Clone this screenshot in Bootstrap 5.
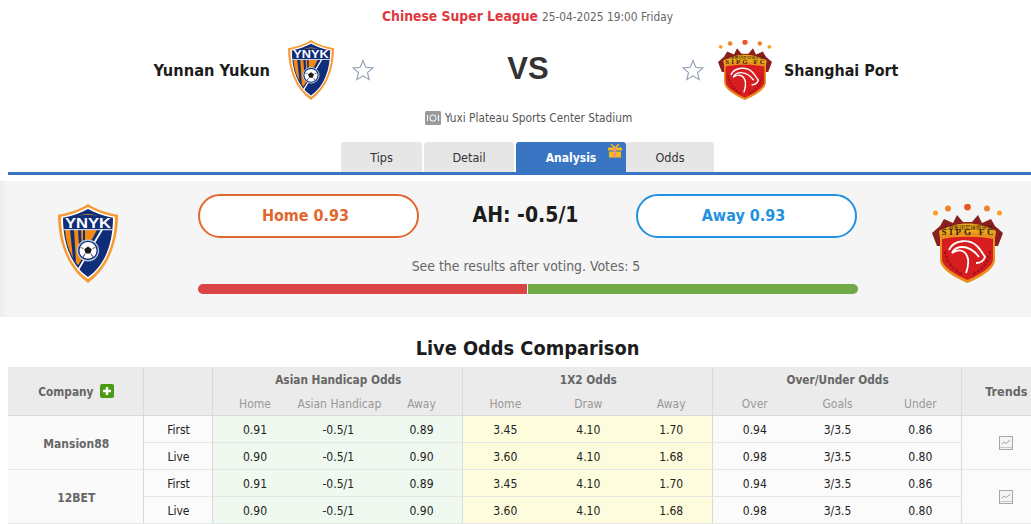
<!DOCTYPE html>
<html lang="en">
<head>
<meta charset="utf-8">
<title>Yunnan Yukun vs Shanghai Port</title>
<link href="https://cdn.jsdelivr.net/npm/bootstrap@5.3.0/dist/css/bootstrap.min.css" rel="stylesheet">
<style>
html,body{overflow:hidden;background:#fff;height:524px}
body{font-family:"DejaVu Sans",Tahoma,sans-serif;font-stretch:condensed;font-size:12px;color:#222}
.pg{width:1039px;margin-left:8px}
.top-line{height:32px;padding-top:6px;line-height:20px}
.league{color:#e0383e;font-size:13.8px;font-weight:700}
.when{color:#666;font-size:11.8px;margin-left:4px}
.teams{display:grid;grid-template-columns:366px 308px 365px;height:75px}
.tname{font-size:16.3px;font-weight:700;color:#1c1c1c;white-space:nowrap;margin-top:3px}
.tname2{font-size:15.9px}
.vs{font-family:"Liberation Sans",sans-serif;font-stretch:normal;font-size:31px;font-weight:700;color:#333;line-height:1;margin-top:-2px}
.star{width:22px;height:22px;flex:none}
.cl{width:46px;height:60px;margin:0 18px}
.cr{width:54px;height:60px;margin:0 12px 0 14px}
.venue{color:#555;height:35px;padding-bottom:13px;padding-left:2px;line-height:18px;font-size:11.75px}
.tabrow{height:30px}
.tb{height:30px;line-height:31px;text-align:center;background:#e6e6e6;color:#333;border-radius:3px 3px 0 0;font-size:12.5px}
.t1{width:81px;margin-right:2px}.t2{width:90px;margin-right:2px}.t3{width:110px}.t4{width:88px}
.tb.on{background:#3a75c4;color:#fff;font-weight:700;font-size:12px;line-height:32px;position:relative}
.gift{position:absolute;left:92px;top:1px;width:14px;height:15px}
.blue{height:3px;background:#3a75c4;width:1100px}
.panel{height:136px;margin-top:6px;background:#f5f5f5;width:1100px;margin-left:-8px;padding-left:8px;box-shadow:inset 8px 0 6px -4px #ececec}
.panel-in{width:1039px}
.panel-l{margin:23px 0 0 50px;flex:none}
.panel-r{margin:23px 0 0 74px;flex:none}
.vote-wrap{width:660px;margin:13px 0 0 80px;flex:none}
.vrow{width:659px}
.vbtn{width:221px;height:44px;border-radius:22px;background:#fff;font-size:16px;font-weight:700;line-height:39px;text-align:center;border:2px solid;padding-right:6px}
.vh{border-color:#e2672f;color:#e2672f}
.va{border-color:#2391de;color:#2391de}
.ah{font-size:21px;font-weight:700;color:#1c1c1c;margin-right:4px}
.seen{color:#666;font-size:13.9px;line-height:20px;margin-top:18px;padding-right:4px}
.pbar{height:10px;margin-top:8px;border-radius:5px;overflow:hidden;gap:1px;background:#fff}
.pr{background:#d94444;width:329px}
.pg2{background:#72aa47;flex:1}
.lhead{font-size:19.8px;font-weight:700;color:#1c1c1c;text-align:center;height:50px;padding-top:13px;line-height:37px;margin:0}
table.odds{table-layout:fixed;width:1041px;margin:0;border-collapse:collapse;font-size:12px;color:#222}
table.odds th,table.odds td{padding:2px 0 0 2px;text-align:center;vertical-align:middle;border:0;box-shadow:none;background:transparent;height:27px;line-height:24px;white-space:nowrap}
table.odds thead th{background:#ebebeb;color:#666;font-weight:700;font-size:11.75px;height:24px;line-height:22px}
table.odds thead .lt{color:#999;font-weight:400;font-size:12px}
table.odds thead .trh{font-size:12.5px}
table.odds .vb{border-right:1px solid #d9d9d9}
table.odds thead tr:first-child th[rowspan],table.odds thead tr:last-child th{border-bottom:1px solid #d9d9d9}
table.odds tbody td{border-bottom:1px solid #e6e6e6;background:#fbfbfb}
table.odds tbody td.co{color:#666;font-weight:700;font-size:12px;background:#fafafa}
table.odds tbody td.gr{background:#eff9ef}
table.odds tbody td.ye{background:#fdfcdc}
.c1{width:135px}.c2{width:69px}.c3{width:83.5px}.c3b{width:83.2px}.c4{width:83px}.c5{width:88px}
.plus{width:14px;height:14px;vertical-align:-2px;margin-left:3px}
.trend{width:14px;height:14px;display:block;margin:-2px auto 0}
.defs{height:0;width:0;display:block}
</style>
</head>
<body>
<svg class="defs">
<defs>
<symbol id="ynyk" viewBox="0 0 60 80" preserveAspectRatio="none">
<path d="M30 0C37 5 48 9 60 11C60 40 50 65 30 80C10 65 0 40 0 11C12 9 23 5 30 0Z" fill="#f79a33"/>
<path d="M30 3C37 7 47 11 57 13C57 40 48 63 30 76C12 63 3 40 3 13C13 11 23 7 30 3Z" fill="#fff"/>
<path d="M30 5C37 9 46 12 55 14C55 40 47 62 30 74C13 62 5 40 5 14C14 12 23 9 30 5Z" fill="#0f2d79"/>
<path d="M7 26H25V54L20 62C12 52 8 40 7 26Z" fill="#f08a12"/>
<path d="M12 26l3 29 3 4-2-33zM20 26l2 28 2-2-1-26z" fill="#0f2d79"/>
<path d="M27 26h12l-5 10-7 2z" fill="#f08a12"/>
<path d="M21 12Q30 8 39 12Q30 10 21 12Z" fill="#f79a33"/>
<path d="M5 26H55" stroke="#c8d2e6" stroke-width="1.400"/>
<path d="M20 67L44 26" stroke="#fff" stroke-width="1.800"/>
<circle cx="30" cy="47" r="10.500" fill="#0f2d79" stroke="#b8c6e0" stroke-width="1.300"/>
<circle cx="30" cy="47" r="8.500" fill="#fff"/>
<path d="M30 43l3.800 2.700-1.500 4.500h-4.600l-1.500-4.500z" fill="#1a1a1a"/>
<path d="M22.500 44l3 1M37.500 44l-3 1M25 53.500l2-3M35 53.500l-2-3" stroke="#666" stroke-width="1.200"/>
<text x="30" y="24" text-anchor="middle" font-family="Liberation Sans,sans-serif" font-weight="700" font-size="15" fill="#fff" textLength="46" lengthAdjust="spacingAndGlyphs">YNYK</text>
</symbol>
<symbol id="sipg" viewBox="0 0 71 79" preserveAspectRatio="none">
<circle cx="3.500" cy="9" r="2.500" fill="#f9a11b"/><circle cx="16" cy="4.500" r="3" fill="#f0832a"/><circle cx="35.500" cy="3" r="3.400" fill="#ea5a20"/><circle cx="55" cy="4.500" r="3" fill="#f0832a"/><circle cx="67.500" cy="9" r="2.500" fill="#f9a11b"/>
<path d="M0 29L8 22L12 15L21 19L25 11L31 18H40L46 11L50 19L59 15L63 22L71 29L66 42H5Z" fill="#8a1f1f"/>
<path d="M7 27C25 17 46 17 64 27L62 42H9Z" fill="#e8a71b"/>
<path d="M8 32C24 27 47 27 63 32V56C63 65 48 74 35.500 79C23 74 8 65 8 56Z" fill="#e8901f"/>
<path d="M10 35C25 32 46 32 61 35V55C61 63 47 71 35.500 76C24 71 10 63 10 55Z" fill="#d81d20"/>
<path d="M17 46C22 35 38 35 45 42C49 46 51 50 53 53C52 56 49 59 44 59M47 53C44 49 38 43 30 43C26 43 22 45 20 49C27 44 34 46 36 55C37 61 35 66 34 69" fill="none" stroke="#fff" stroke-width="1.800"/>
<path d="M13 47C14 57 20 65 31 71M58 47C57 57 51 65 40 71" fill="none" stroke="#a71417" stroke-width="2.500" stroke-dasharray="3 1.500"/>
<text x="35.500" y="24.500" text-anchor="middle" font-family="Noto Sans CJK SC,sans-serif" font-size="5" fill="#3a1a0a" textLength="50" lengthAdjust="spacingAndGlyphs">上港集团足球俱乐部</text>
<text x="35.500" y="31" text-anchor="middle" font-family="Liberation Serif,serif" font-weight="700" font-size="9" fill="#3a1a0a" textLength="52">SIPG FC</text>
</symbol>
<symbol id="st" viewBox="0 0 22 22"><path d="M11 1.500L13.800 8.300L21 8.900L15.500 13.600L17.200 20.700L11 16.900L4.800 20.700L6.500 13.600L1 8.900L8.200 8.300Z" fill="#fff" stroke="#8d9db5" stroke-width="1.100"/></symbol>
<symbol id="tr" viewBox="0 0 14 14"><rect x=".5" y=".5" width="13" height="13" fill="#f4f4f4" stroke="#a8a8a8"/><path d="M1 11.500h12" stroke="#c8c8c8"/><path d="M2.500 8.500L5 6L7 7.500L11.500 4" fill="none" stroke="#a8a8a8"/></symbol>
</defs>
</svg>
<div class="pg">
  <div class="top-line text-center"><span class="league">Chinese Super League</span><span class="when">25-04-2025 19:00 Friday</span></div>
  <div class="teams">
    <div class="d-flex align-items-center justify-content-end">
      <span class="tname">Yunnan Yukun</span>
      <svg class="cl"><use href="#ynyk" width="46" height="60"/></svg>
      <svg class="star"><use href="#st"/></svg>
    </div>
    <div class="d-flex align-items-center justify-content-center"><span class="vs">VS</span></div>
    <div class="d-flex align-items-center">
      <svg class="star"><use href="#st"/></svg>
      <svg class="cr"><use href="#sipg" width="54" height="60"/></svg>
      <span class="tname tname2">Shanghai Port</span>
    </div>
  </div>
  <div class="venue d-flex justify-content-center align-items-center">
    <svg width="16" height="14" class="me-1"><rect width="16" height="14" rx="1.500" fill="#999"/><circle cx="8" cy="7" r="3.200" fill="none" stroke="#fff"/><path d="M2.500 4v6M13.500 4v6" stroke="#fff"/></svg>
    <span>Yuxi Plateau Sports Center Stadium</span>
  </div>
  <div class="tabrow d-flex justify-content-center">
    <div class="tb t1">Tips</div>
    <div class="tb t2">Detail</div>
    <div class="tb on t3">Analysis
      <svg class="gift" viewBox="0 0 14 15"><path d="M3 1l4 4 4-4" fill="none" stroke="#f5b91d" stroke-width="1.600"/><rect y="4.500" width="14" height="3" fill="#f5b91d"/><rect x="1" y="8.500" width="12" height="6" fill="#f5b91d"/><rect x="6" y="4.500" width="2" height="10" fill="#e98aa0"/></svg>
    </div>
    <div class="tb t4">Odds</div>
  </div>
  <div class="blue"></div>
  <div class="panel">
    <div class="panel-in d-flex align-items-start">
      <svg width="60" height="79" class="panel-l"><use href="#ynyk" width="60" height="79"/></svg>
      <div class="vote-wrap">
        <div class="vrow d-flex align-items-center justify-content-between">
          <div class="vbtn vh">Home 0.93</div>
          <div class="ah">AH: -0.5/1</div>
          <div class="vbtn va">Away 0.93</div>
        </div>
        <div class="seen text-center">See the results after voting. Votes: 5</div>
        <div class="pbar d-flex"><div class="pr"></div><div class="pg2"></div></div>
      </div>
      <svg width="71" height="79" class="panel-r"><use href="#sipg" width="71" height="79"/></svg>
    </div>
  </div>
  <h2 class="lhead">Live Odds Comparison</h2>
  <table class="table odds">
    <colgroup><col class="c1"><col class="c2"><col class="c3"><col class="c3"><col class="c3"><col class="c3b"><col class="c3b"><col class="c3b"><col class="c4"><col class="c4"><col class="c4"><col class="c5"></colgroup>
    <thead>
      <tr><th rowspan="2" class="vb">Company <svg class="plus" viewBox="0 0 14 14"><rect width="14" height="14" rx="2" fill="#4b9b12"/><path d="M7 3v8M3 7h8" stroke="#fff" stroke-width="2.400"/></svg></th><th rowspan="2" class="vb"></th><th colspan="3" class="vb">Asian Handicap Odds</th><th colspan="3" class="vb">1X2 Odds</th><th colspan="3" class="vb">Over/Under Odds</th><th rowspan="2" class="trh">Trends</th></tr>
      <tr><th class="lt">Home</th><th class="lt">Asian Handicap</th><th class="lt vb">Away</th><th class="lt">Home</th><th class="lt">Draw</th><th class="lt vb">Away</th><th class="lt">Over</th><th class="lt">Goals</th><th class="lt vb">Under</th></tr>
    </thead>
    <tbody>
      <tr><td rowspan="2" class="co vb">Mansion88</td><td class="vb">First</td><td class="gr">0.91</td><td class="gr">-0.5/1</td><td class="gr vb">0.89</td><td class="ye">3.45</td><td class="ye">4.10</td><td class="ye vb">1.70</td><td>0.94</td><td>3/3.5</td><td class="vb">0.86</td><td rowspan="2"><svg class="trend"><use href="#tr"/></svg></td></tr>
      <tr><td class="vb">Live</td><td class="gr">0.90</td><td class="gr">-0.5/1</td><td class="gr vb">0.90</td><td class="ye">3.60</td><td class="ye">4.10</td><td class="ye vb">1.68</td><td>0.98</td><td>3/3.5</td><td class="vb">0.80</td></tr>
      <tr><td rowspan="2" class="co vb">12BET</td><td class="vb">First</td><td class="gr">0.91</td><td class="gr">-0.5/1</td><td class="gr vb">0.89</td><td class="ye">3.45</td><td class="ye">4.10</td><td class="ye vb">1.70</td><td>0.94</td><td>3/3.5</td><td class="vb">0.86</td><td rowspan="2"><svg class="trend"><use href="#tr"/></svg></td></tr>
      <tr><td class="vb">Live</td><td class="gr">0.90</td><td class="gr">-0.5/1</td><td class="gr vb">0.90</td><td class="ye">3.60</td><td class="ye">4.10</td><td class="ye vb">1.68</td><td>0.98</td><td>3/3.5</td><td class="vb">0.80</td></tr>
    </tbody>
  </table>
</div>
</body>
</html>
